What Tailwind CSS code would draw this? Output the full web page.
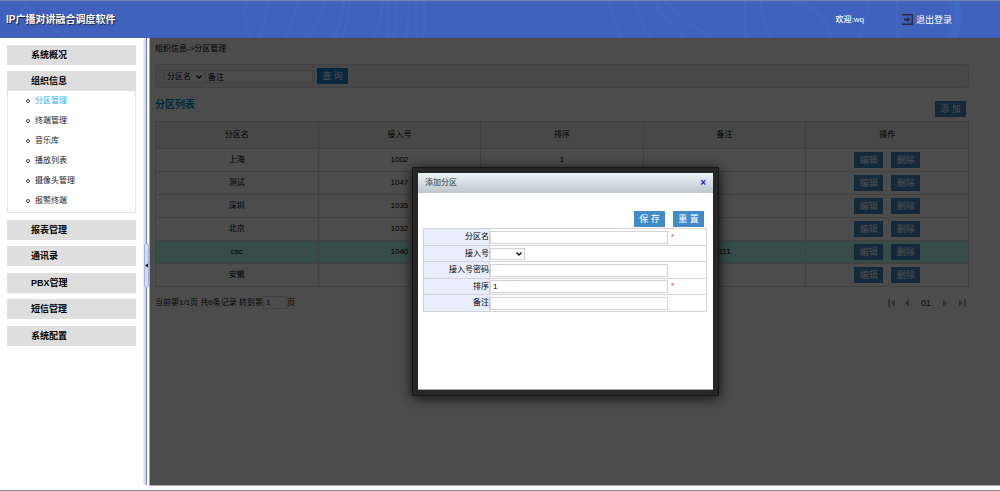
<!DOCTYPE html>
<html lang="zh-CN">
<head>
    <meta charset="UTF-8">
    <meta name="viewport" content="width=device-width, initial-scale=1.0">
    <title>IP广播对讲融合调度软件</title>
    <!-- Tailwind CSS CDN -->
    <script src="https://cdn.jsdelivr.net/npm/@tailwindcss/browser@4"></script>
    <style>
        body {
            font-family: 'Liberation Sans', 'Noto Sans CJK SC', sans-serif;
        }
    </style>
</head>
<body class="flex flex-col h-screen overflow-hidden bg-white text-[8px] leading-3 text-black">
    <!-- Header -->
    <header class="relative shrink-0 flex items-center h-[38px] pl-[6px] pr-12 bg-[#4062bd] border-t border-[#7186ad] text-white text-[9px]">
        <svg class="absolute inset-0 w-full h-full" viewBox="0 0 1000 37" preserveAspectRatio="none" fill="none" stroke="#6f93e6" stroke-opacity=".06" stroke-width="3">
            <path d="M15 0Q30 22 52 37M22 0Q42 22 66 37M246 0Q242 20 250 37M268 0Q266 18 260 37M298 0Q294 20 286 37M325 0Q320 24 304 37M344 0Q342 20 334 37M350 0Q348 20 342 37M382 0Q382 20 374 37M388 0V37M396 0Q398 18 394 37M408 0Q410 18 406 37M416 0V37M424 0V37M610 0Q612 20 622 37M635 0Q640 20 650 37M655 0Q664 20 684 37M665 0Q680 16 712 37M745 0V37M760 0Q762 20 770 37M790 0Q824 4 832 37M868 0Q868 18 858 37M897 0V37M950 0Q954 18 948 37"/>
            <path d="M956 0Q960 18 954 37" stroke="#4c9df0" stroke-opacity=".12" stroke-width="8"/>
        </svg>
        <h1 class="relative grow text-[10px] font-bold [text-shadow:1px_1px_1px_#101c40]">IP广播对讲融合调度软件</h1>
        <span class="relative mr-[38px] text-[8px] font-medium">欢迎:wq</span>
        <a href="#" class="relative flex items-center gap-[3px]">
            <svg class="w-[11px] h-[11px]" viewBox="0 0 11 11" fill="none" stroke="#2b2f3d" stroke-width="1.5">
                <path d="M0 .8H10.200V10.200H0"/>
                <path d="M2 5.500H6" stroke-width="2"/>
                <path d="M5 2.500L8.500 5.500L5 8.500Z" fill="#2b2f3d" stroke="none"/>
            </svg>
            退出登录
        </a>
    </header>

    <div class="flex grow min-h-0">
        <!-- Sidebar menu -->
        <nav class="w-[143px] shrink-0 pl-[7px] pr-[7px] pt-[7px]">
            <h2 class="h-5 mb-[6px] pl-6 bg-[#dedede] text-[9px] leading-5 font-bold">系统概况</h2>
            <h2 class="h-5 pl-6 bg-[#dedede] text-[9px] leading-5 font-bold">组织信息</h2>
            <ul class="mb-[7px] pb-px border border-t-0 border-[#e4e4e4] text-[#222]">
                <li class="flex items-center gap-[5px] h-5 pl-[18px]"><i class="w-1 h-1 rounded-full border border-[#444]"></i><a href="#" class="text-[#1eaeff]">分区管理</a></li>
                <li class="flex items-center gap-[5px] h-5 pl-[18px]"><i class="w-1 h-1 rounded-full border border-[#444]"></i><a href="#">终端管理</a></li>
                <li class="flex items-center gap-[5px] h-5 pl-[18px]"><i class="w-1 h-1 rounded-full border border-[#444]"></i><a href="#">音乐库</a></li>
                <li class="flex items-center gap-[5px] h-5 pl-[18px]"><i class="w-1 h-1 rounded-full border border-[#444]"></i><a href="#">播放列表</a></li>
                <li class="flex items-center gap-[5px] h-5 pl-[18px]"><i class="w-1 h-1 rounded-full border border-[#444]"></i><a href="#">摄像头管理</a></li>
                <li class="flex items-center gap-[5px] h-5 pl-[18px]"><i class="w-1 h-1 rounded-full border border-[#444]"></i><a href="#">报警终端</a></li>
            </ul>
            <h2 class="h-5 mb-[6px] pl-6 bg-[#dedede] text-[9px] leading-5 font-bold">报表管理</h2>
            <h2 class="h-5 mb-[7px] pl-6 bg-[#dedede] text-[9px] leading-5 font-bold">通讯录</h2>
            <h2 class="h-5 mb-[6px] pl-6 bg-[#dedede] text-[9px] leading-5 font-bold">PBX管理</h2>
            <h2 class="h-5 mb-[7px] pl-6 bg-[#dedede] text-[9px] leading-5 font-bold">短信管理</h2>
            <h2 class="h-5 pl-6 bg-[#dedede] text-[9px] leading-5 font-bold">系统配置</h2>
        </nav>

        <!-- Splitter -->
        <div class="relative flex w-[6px] shrink-0 mb-[5px]">
            <div class="w-[3px] rounded-tl-sm bg-linear-to-r from-[#f0f2ff] to-[#c3cdf5]"></div>
            <div class="w-px bg-[#7088c8]"></div>
            <button aria-label="收起菜单" class="absolute left-px top-[205px] flex items-center justify-center w-[5px] h-[45px] rounded-sm border border-[#a3b4e4] bg-[#cdd9fa]">
                <svg class="w-[3px] h-[43px] shrink-0" viewBox="0 0 3 43" fill="#fff"><path d="M1 2H2V3H1ZM1 4H2V5H1ZM1 37H2V38H1ZM1 39H2V40H1Z"/><path d="M3 19.500V23.500L0 21.500Z" fill="#111"/></svg>
            </button>
        </div>

        <!-- Main pane -->
        <main class="relative grow min-w-0 mb-1 pl-[5px] pr-[31px] pt-[5px] border-l border-b border-[#aaa] overflow-hidden">
            <p>组织信息-&gt;分区管理</p>
            <form class="flex items-center h-6 mt-[9px] pl-2 bg-[#f2f2f2] border border-[#ddd] rounded-[3px]">
                <div class="relative">
                    <select aria-label="查询条件" class="block appearance-none w-[41px] h-[13px] pl-[2px] bg-white border border-[#d8d8d8]"><option>分区名</option></select>
                    <svg class="absolute right-[3px] top-[5px] w-[6px] h-1 pointer-events-none" viewBox="0 0 6 4" fill="none" stroke="#000" stroke-width="1.3"><path d="M.5 .5L3 3L5.500 .5"/></svg>
                </div>
                <input type="text" aria-label="关键字" value="备注" class="w-[107px] h-[13px] ml-px px-px bg-white border border-[#d8d8d8]">
                <button type="button" class="w-[31px] h-4 ml-1 bg-[#1c87cf] text-white text-[9px]">查 询</button>
            </form>
            <div class="flex justify-between mt-[10px] pr-[3px]">
                <h2 class="mt-px text-[10px] font-bold text-[#008fd0]">分区列表</h2>
                <button class="w-[31px] h-4 mt-[3px] mb-1 bg-[#428bca] text-white text-[9px]">添 加</button>
            </div>
            <table class="w-full table-fixed border-collapse text-center [&_td]:border [&_th]:border [&_td]:border-[#d8d8d8] [&_th]:border-[#d8d8d8] [&_td]:p-0 [&_th]:p-0 [&_th]:font-normal [&_button]:w-[29px] [&_button]:h-4 [&_button]:mx-1 [&_button]:bg-[#428bca] [&_button]:text-white [&_button]:text-[9px]">
                <thead>
                    <tr class="h-[27px] bg-[#f2f2f2]"><th>分区名</th><th>接入号</th><th>排序</th><th>备注</th><th>操作</th></tr>
                </thead>
                <tbody>
                    <tr class="h-[23px]"><td>上海</td><td>1002</td><td>1</td><td></td><td><button>编辑</button><button>删除</button></td></tr>
                    <tr class="h-[23px]"><td>测试</td><td>1047</td><td>1</td><td></td><td><button>编辑</button><button>删除</button></td></tr>
                    <tr class="h-[23px]"><td>深圳</td><td>1035</td><td>1</td><td></td><td><button>编辑</button><button>删除</button></td></tr>
                    <tr class="h-[23px]"><td>北京</td><td>1032</td><td>1</td><td></td><td><button>编辑</button><button>删除</button></td></tr>
                    <tr class="h-[23px] bg-[#b4fff0]"><td>csc</td><td>1040</td><td>1</td><td>111</td><td><button>编辑</button><button>删除</button></td></tr>
                    <tr class="h-[23px]"><td>安徽</td><td></td><td></td><td></td><td><button>编辑</button><button>删除</button></td></tr>
                </tbody>
            </table>
            <div class="flex items-center justify-between mt-[9px] pr-[3px] text-[#222]">
                <label class="flex items-center whitespace-pre">当前第1/1页 共6条记录 转到第<input type="text" value="1" class="w-6 h-[13px] px-[2px] bg-white border border-[#d8d8d8]">页</label>
                <div class="flex items-center text-[#a0a8b0]">
                    <a href="#" aria-label="首页"><svg class="w-2 h-2" viewBox="0 0 8 8" fill="currentColor"><path d="M0 0H2V8H0ZM7 0V8L3 4Z"/></svg></a>
                    <a href="#" aria-label="上一页" class="ml-2"><svg class="w-[6px] h-2" viewBox="0 0 6 8" fill="currentColor"><path d="M5 0V8L1 4Z"/></svg></a>
                    <span class="mx-[11px] text-[9px] text-[#222]">01</span>
                    <a href="#" aria-label="下一页" class="mr-[10px]"><svg class="w-[6px] h-2" viewBox="0 0 6 8" fill="currentColor"><path d="M1 0V8L5 4Z"/></svg></a>
                    <a href="#" aria-label="末页"><svg class="w-2 h-2" viewBox="0 0 8 8" fill="currentColor"><path d="M6 0H8V8H6ZM1 0V8L5 4Z"/></svg></a>
                </div>
            </div>

            <!-- Modal -->
            <div class="absolute inset-0 flex justify-center items-start pt-[129px] pr-[19px] bg-black/70">
                <div role="dialog" aria-label="添加分区" class="w-[307px] p-[5px] bg-[#272727] border border-[#151515] shadow-[0_2px_12px_rgba(0,0,0,0.8)]">
                    <div class="h-[217px] bg-white border-b border-[#aaa]">
                        <div class="flex items-center justify-between h-5 px-[7px] bg-linear-to-b from-[#edf4f6] to-[#bcc7cc] text-[#333]">
                            <span>添加分区</span>
                            <button aria-label="关闭" class="text-[10px] leading-3 font-bold text-[#1a1aee]">×</button>
                        </div>
                        <form class="pl-[5px] pr-[6px] pt-[18px]">
                            <div class="flex justify-end gap-2 mb-px pr-[3px]">
                                <button type="button" class="w-[31px] h-4 bg-[#428bca] text-white text-[9px]">保 存</button>
                                <button type="button" class="w-[31px] h-4 bg-[#428bca] text-white text-[9px]">重 置</button>
                            </div>
                            <table class="w-full table-fixed border-collapse [&_td]:border [&_th]:border [&_td]:border-[#d4d4d4] [&_th]:border-[#d4d4d4] [&_td]:p-0 [&_th]:p-0 [&_th]:w-[66px] [&_th]:bg-[#e8eefd] [&_th]:font-normal [&_th]:text-right [&_input]:block [&_input]:w-[178px] [&_input]:h-[13px] [&_input]:px-[2px] [&_input]:border [&_input]:border-[#d4d4d4]">
                                <tr class="h-[17px]"><th><label for="name">分区名</label></th><td><div class="flex gap-[3px]"><input id="name" type="text"><span class="text-[#f33]">*</span></div></td></tr>
                                <tr class="h-[16px]"><th><label for="number">接入号</label></th><td>
                                    <div class="relative w-[35px]">
                                        <select id="number" class="block appearance-none w-[35px] h-3 bg-white border border-[#d4d4d4]"><option></option></select>
                                        <svg class="absolute right-[3px] top-1 w-[6px] h-1 pointer-events-none" viewBox="0 0 6 4" fill="none" stroke="#000" stroke-width="1.3"><path d="M.5 .5L3 3L5.500 .5"/></svg>
                                    </div>
                                </td></tr>
                                <tr class="h-[17px]"><th><label for="password">接入号密码</label></th><td><input id="password" type="text"></td></tr>
                                <tr class="h-[16px]"><th><label for="order">排序</label></th><td><div class="flex gap-[3px]"><input id="order" type="text" value="1"><span class="text-[#f33]">*</span></div></td></tr>
                                <tr class="h-[17px]"><th><label for="remark">备注</label></th><td><input id="remark" type="text"></td></tr>
                            </table>
                        </form>
                    </div>
                </div>
            </div>
        </main>
    </div>
    <div class="h-px shrink-0 bg-[#7a8c96]"></div>
</body>
</html>
